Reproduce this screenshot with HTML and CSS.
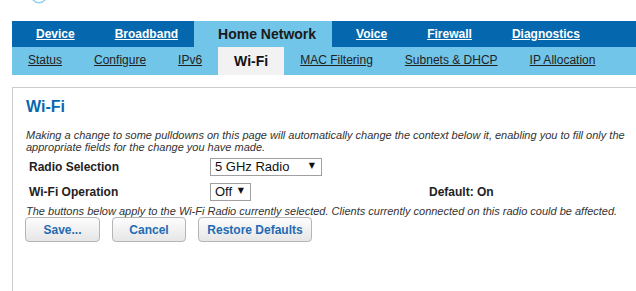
FILE: index.html
```html
<!DOCTYPE html>
<html lang="en">
<head>
    <meta charset="UTF-8">
    <meta name="viewport" content="width=device-width, initial-scale=1.0">
    <title>Home Network - Wi-Fi</title>
    <link rel="stylesheet" href="styles.css">
</head>
<body>
    <div class="page">
        <div class="logo">
            <svg width="14" height="5" viewBox="0 0 14 5">
                <path d="M0 0 Q7 7 14 0 L12 0 Q7 4 2 0 Z" fill="#8fd0f0"/>
            </svg>
        </div>

        <ul class="main-nav">
            <li><a href="#">Device</a></li>
            <li><a href="#">Broadband</a></li>
            <li class="active">Home Network</li>
            <li><a href="#">Voice</a></li>
            <li><a href="#">Firewall</a></li>
            <li><a href="#">Diagnostics</a></li>
        </ul>

        <ul class="sub-nav">
            <li><a href="#">Status</a></li>
            <li><a href="#">Configure</a></li>
            <li><a href="#">IPv6</a></li>
            <li class="active">Wi-Fi</li>
            <li><a href="#">MAC Filtering</a></li>
            <li><a href="#">Subnets &amp; DHCP</a></li>
            <li><a href="#">IP Allocation</a></li>
        </ul>

        <div class="content">
            <h2>Wi-Fi</h2>
            <p class="note">Making a change to some pulldowns on this page will automatically change the context below it, enabling you to fill only the appropriate fields for the change you have made.</p>

            <form class="settings">
                <div class="row">
                    <label for="radio">Radio Selection</label>
                    <span class="select-wrap wide">
                        <select id="radio">
                            <option>5 GHz Radio</option>
                            <option>2.4 GHz Radio</option>
                        </select>
                    </span>
                    <span></span>
                </div>
                <div class="row">
                    <label for="operation">Wi-Fi Operation</label>
                    <span class="select-wrap narrow">
                        <select id="operation">
                            <option>Off</option>
                            <option>On</option>
                        </select>
                    </span>
                    <span class="default">Default: On</span>
                </div>

                <p class="note">The buttons below apply to the Wi-Fi Radio currently selected. Clients currently connected on this radio could be affected.</p>

                <div class="buttons">
                    <button type="button" class="btn save">Save...</button>
                    <button type="button" class="btn cancel">Cancel</button>
                    <button type="button" class="btn restore">Restore Defaults</button>
                </div>
            </form>
        </div>
    </div>
</body>
</html>
```

FILE: styles.css
```css
* {
    margin: 0;
    padding: 0;
    box-sizing: border-box;
    font-family: 'Liberation Sans', Arial, sans-serif;
}

body {
    background-color: #fff;
    overflow: hidden;
}

.page {
    padding-left: 12px;
    min-height: 100vh;
    display: flex;
    flex-direction: column;
}

.logo {
    height: 21px;
    padding-left: 20px;
}

.logo svg {
    display: block;
}

/* Top level tabs */
.main-nav {
    display: flex;
    list-style: none;
    background-color: #0568ae;
    height: 26px;
}

.main-nav li {
    padding: 0 16px 0 24px;
    line-height: 26px;
    font-size: 12px;
    font-weight: bold;
}

.main-nav a {
    color: #fff;
    text-decoration: underline;
}

.main-nav li.active {
    background-color: #71c5e8;
    color: #1a1a1a;
    font-size: 14px;
}

/* Second level tabs */
.sub-nav {
    display: flex;
    list-style: none;
    background-color: #71c5e8;
    height: 28px;
}

.sub-nav li {
    padding: 0 16px;
    line-height: 27px;
    font-size: 12px;
}

.sub-nav a {
    color: #222;
    text-decoration: underline;
}

.sub-nav li.active {
    background-color: #f2f2f2;
    color: #111;
    font-size: 14px;
    font-weight: bold;
    line-height: 29px;
}

/* Page body */
.content {
    flex: 1;
    margin-top: 12px;
    border-top: 1px solid #ccc;
    border-left: 1px solid #ccc;
    padding: 10px 6px 0 13px;
}

.content h2 {
    color: #0568ae;
    font-size: 16px;
    line-height: 18px;
}

.note {
    font-size: 11px;
    line-height: 12px;
    font-style: italic;
    color: #333;
}

.content h2 + .note {
    margin-top: 13px;
}

.settings .row {
    display: grid;
    grid-template-columns: 181px 219px auto;
    align-items: center;
    height: 25px;
    padding-left: 3px;
    font-size: 12px;
    font-weight: bold;
    color: #222;
}

.settings .row:first-of-type {
    margin-top: 1px;
}

.select-wrap {
    position: relative;
    display: inline-block;
    height: 18px;
}

.select-wrap.wide {
    width: 112px;
}

.select-wrap.narrow {
    width: 41px;
}

.select-wrap select {
    appearance: none;
    -webkit-appearance: none;
    width: 100%;
    height: 18px;
    border: 1px solid #a0a0a0;
    background-color: #fff;
    color: #111;
    font-size: 13px;
    padding: 0 14px 0 4px;
    line-height: 16px;
    border-radius: 0;
}

.select-wrap::after {
    content: "\25BC";
    position: absolute;
    right: 7px;
    top: 3px;
    font-size: 8px;
    line-height: 10px;
    color: #111;
    font-family: 'DejaVu Sans', sans-serif;
    pointer-events: none;
}

.settings .note {
    margin-top: 1px;
}

.buttons {
    display: flex;
    gap: 12px;
    margin-left: -1px;
}

.btn {
    height: 25px;
    border: 1px solid #b5b5b5;
    border-radius: 4px;
    background: linear-gradient(#fdfdfd, #e6e6e6);
    color: #1f6bb3;
    font-size: 12px;
    font-weight: bold;
    cursor: pointer;
}

.btn.save {
    width: 75px;
}

.btn.cancel {
    width: 74px;
}

.btn.restore {
    width: 114px;
}
```
